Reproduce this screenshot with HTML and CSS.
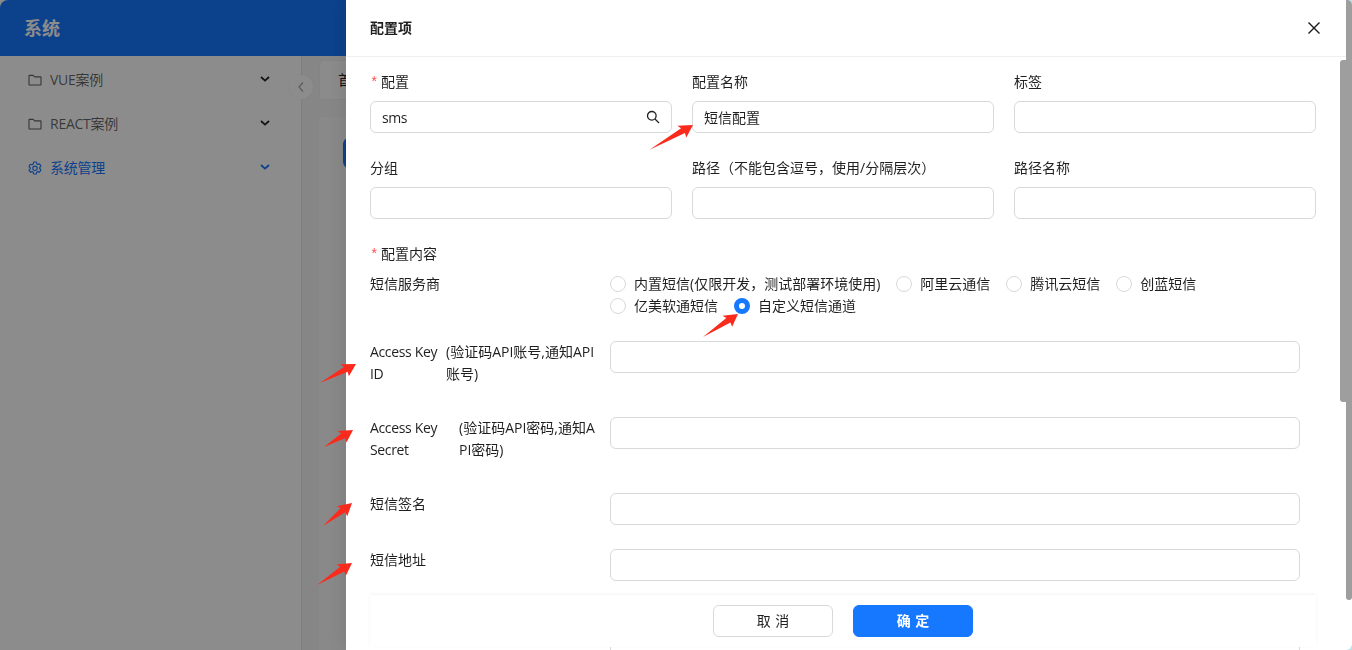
FILE: index.html
```html
<!DOCTYPE html>
<html lang="zh-CN">
<head>
<meta charset="utf-8">
<title>配置项</title>
<link rel="stylesheet" href="styles.css">
</head>
<body>
<div class="app">
  <header class="topbar"><span class="brand">系统</span></header>
  <div class="workspace">
    <aside class="sidebar">
      <nav class="menu">
        <a class="menu-item">
          <svg class="menu-icon" viewBox="0 0 14 14"><path d="M1 3a.6.6 0 0 1 .6-.6h3.6l1.5 1.5h5.7a.6.6 0 0 1 .6.6v6.9a.6.6 0 0 1-.6.6H1.6a.6.6 0 0 1-.6-.6z"/></svg>
          <span class="menu-text">VUE案例</span>
          <svg class="menu-arrow" viewBox="0 0 10 6"><path d="M1 1l4 3.6L9 1"/></svg>
        </a>
        <a class="menu-item">
          <svg class="menu-icon" viewBox="0 0 14 14"><path d="M1 3a.6.6 0 0 1 .6-.6h3.6l1.5 1.5h5.7a.6.6 0 0 1 .6.6v6.9a.6.6 0 0 1-.6.6H1.6a.6.6 0 0 1-.6-.6z"/></svg>
          <span class="menu-text">REACT案例</span>
          <svg class="menu-arrow" viewBox="0 0 10 6"><path d="M1 1l4 3.6L9 1"/></svg>
        </a>
        <a class="menu-item is-active">
          <svg class="menu-icon" viewBox="0 0 14 14"><path d="M5.6 1h2.8l.4 1.8 1.1.6 1.8-.5 1.3 2.3-1.3 1.3v1l1.3 1.3-1.3 2.3-1.8-.5-1.1.6-.4 1.8H5.6l-.4-1.8-1.1-.6-1.8.5L1 9.100l1.300-1.300v-1L1 5.500l1.300-2.300 1.800.5 1.100-.6z"/><circle cx="7" cy="7.300" r="2.200"/></svg>
          <span class="menu-text">系统管理</span>
          <svg class="menu-arrow" viewBox="0 0 10 6"><path d="M1 1l4 3.600L9 1"/></svg>
        </a>
      </nav>
    </aside>
    <main class="main">
      <div class="tabs"><span class="tab-text">首页</span></div>
      <section class="card"><span class="card-button"></span></section>
    </main>
    <button class="collapse" type="button" aria-label="收起">
      <svg viewBox="0 0 8 12"><path d="M6 1.500L2 6l4 4.500"/></svg>
    </button>
  </div>
</div>

<div class="mask"></div>

<aside class="drawer">
  <header class="drawer-head">
    <h1 class="drawer-title">配置项</h1>
    <button class="close" type="button" aria-label="关闭">
      <svg viewBox="0 0 14 14"><path d="M1.500 1.500l11 11M12.500 1.500l-11 11"/></svg>
    </button>
  </header>
  <div class="drawer-body">
    <form class="form">
      <div class="grid">
        <div class="field">
          <label class="label"><span class="req">*</span>配置</label>
          <div class="search-box">
            <input class="input input-latin" value="sms">
            <svg class="search-icon" viewBox="0 0 14 14"><circle cx="5.800" cy="5.800" r="4.300"/><path d="M9 9l4 4"/></svg>
          </div>
        </div>
        <div class="field">
          <label class="label">配置名称</label>
          <input class="input" value="短信配置">
        </div>
        <div class="field">
          <label class="label">标签</label>
          <input class="input">
        </div>
        <div class="field">
          <label class="label">分组</label>
          <input class="input">
        </div>
        <div class="field">
          <label class="label">路径（不能包含逗号，使用/分隔层次）</label>
          <input class="input">
        </div>
        <div class="field">
          <label class="label">路径名称</label>
          <input class="input">
        </div>
      </div>

      <label class="label"><span class="req">*</span>配置内容</label>

      <div class="sub-row">
        <div class="sub-label">短信服务商</div>
        <div class="radios">
          <label class="radio"><span class="dot"></span><span class="radio-text">内置短信(仅限开发，测试部署环境使用)</span></label>
          <label class="radio"><span class="dot"></span><span class="radio-text">阿里云通信</span></label>
          <label class="radio"><span class="dot"></span><span class="radio-text">腾讯云短信</span></label>
          <label class="radio"><span class="dot"></span><span class="radio-text">创蓝短信</span></label>
          <label class="radio"><span class="dot"></span><span class="radio-text">亿美软通短信</span></label>
          <label class="radio"><span class="dot is-on"></span><span class="radio-text">自定义短信通道</span></label>
        </div>
      </div>

      <div class="sub-row is-tall">
        <div class="sub-label">
          <span class="key key-id">Access Key ID</span>
          <span class="note">(验证码API账号,通知API账号)</span>
        </div>
        <input class="input sub-input">
      </div>
      <div class="sub-row is-tall">
        <div class="sub-label">
          <span class="key key-secret">Access Key Secret</span>
          <span class="note">(验证码API密码,通知API密码)</span>
        </div>
        <input class="input sub-input">
      </div>
      <div class="sub-row">
        <div class="sub-label">短信签名</div>
        <input class="input sub-input">
      </div>
      <div class="sub-row">
        <div class="sub-label">短信地址</div>
        <input class="input sub-input">
      </div>
      <div class="sub-row">
        <div class="sub-label">短信模板</div>
        <div class="input sub-input tall-input"></div>
      </div>
    </form>
  </div>
  <footer class="drawer-foot">
    <button class="btn" type="button">取 消</button>
    <button class="btn btn-primary" type="button">确 定</button>
  </footer>
  <div class="inner-thumb"></div>
</aside>

<div class="outer-scroll"><div class="outer-track"><div class="outer-thumb"></div></div></div>

<svg class="arrows" viewBox="0 0 1352 650" aria-hidden="true">
  <polygon transform="translate(693 125) rotate(-29.700)" points="-50,0 -12,-3 -14,-7 0,0 -12,7.500 -11,3"/>
  <polygon transform="translate(738 314) rotate(-33.300)" points="-41.900,0 -12,-3 -14,-7 0,0 -12,7.500 -11,3"/>
  <polygon transform="translate(356 364) rotate(-27.800)" points="-40.700,0 -12,-3 -14,-7 0,0 -12,7.500 -11,3"/>
  <polygon transform="translate(353 430) rotate(-30.400)" points="-33.600,0 -12,-3 -14,-7 0,0 -12,7.500 -11,3"/>
  <polygon transform="translate(352 503) rotate(-38.400)" points="-37,0 -12,-3 -14,-7 0,0 -12,7.500 -11,3"/>
  <polygon transform="translate(352 563) rotate(-32.200)" points="-41.300,0 -12,-3 -14,-7 0,0 -12,7.500 -11,3"/>
</svg>
</body>
</html>
```

FILE: styles.css
```css
* { box-sizing: border-box; }
html, body {
  margin: 0;
  width: 1352px;
  height: 650px;
  overflow: hidden;
  background: #fff;
}
body {
  font-family: "Open Sans", "Noto Sans CJK SC", "Noto Sans", sans-serif;
  font-size: 14px;
  line-height: 22px;
  color: rgba(0, 0, 0, .88);
}

/* Page behind the drawer */
.app {
  height: 650px;
  display: flex;
  flex-direction: column;
  border-top-left-radius: 8px;
  overflow: hidden;
  background: #fff;
}
.topbar {
  height: 56px;
  flex: none;
  display: flex;
  align-items: center;
  padding-left: 24px;
  background: #1677ff;
}
.brand {
  font-size: 18px;
  font-weight: 700;
  color: #fff;
}
.workspace {
  flex: 1;
  display: flex;
  position: relative;
  min-height: 0;
}
.sidebar {
  width: 302px;
  flex: none;
  border-right: 1px solid #e6e6e6;
  background: #fff;
}
.menu {
  display: flex;
  flex-direction: column;
  gap: 4px;
  padding: 4px 31px 0 28px;
}
.menu-item {
  height: 40px;
  display: flex;
  align-items: center;
  color: rgba(0, 0, 0, .62);
}
.menu-item.is-active { color: #1677ff; }
.menu-icon {
  width: 14px;
  height: 14px;
  fill: none;
  stroke: currentColor;
  stroke-width: 1.100;
  stroke-linejoin: round;
  flex: none;
}
.menu-text {
  margin-left: 8px;
  flex: 1;
  letter-spacing: -.25px;
}
.menu-arrow {
  width: 10px;
  height: 6px;
  fill: none;
  stroke: rgba(0, 0, 0, .85);
  stroke-width: 1.800;
  margin-top: -2px;
}
.is-active .menu-arrow { stroke: #1677ff; }
.main {
  flex: 1;
  padding: 4px 0 0 17px;
  background: #f5f5f5;
}
.tabs {
  height: 40px;
  display: flex;
  align-items: center;
  padding-left: 18px;
  border: 1px solid #f0f0f0;
  border-radius: 6px 6px 0 0;
  background: #fdfdfd;
  font-size: 14px;
}
.card {
  margin-top: 17px;
  height: 560px;
  padding: 21px 24px;
  background: #fafafa;
}
.card-button {
  display: block;
  width: 100px;
  height: 30px;
  border-radius: 6px;
  background: #1677ff;
}
.collapse {
  position: absolute;
  left: 289px;
  top: 19px;
  width: 24px;
  height: 24px;
  padding: 0;
  display: flex;
  align-items: center;
  justify-content: center;
  border: 0;
  border-radius: 50%;
  background: #fff;
  box-shadow: 0 0 2px rgba(0, 0, 0, .06);
}
.collapse svg {
  width: 8px;
  height: 12px;
  fill: none;
  stroke: rgba(0, 0, 0, .35);
  stroke-width: 1.200;
}

/* Overlay layers */
.mask {
  position: fixed;
  inset: 0;
  background: rgba(0, 0, 0, .45);
}
.drawer {
  position: fixed;
  left: 346px;
  top: 0;
  width: 1006px;
  height: 650px;
  display: flex;
  flex-direction: column;
  background: #fff;
  box-shadow: -6px 0 16px rgba(0, 0, 0, .08);
}
.drawer-head {
  height: 57px;
  flex: none;
  display: flex;
  align-items: center;
  justify-content: space-between;
  padding: 0 31px 0 24px;
  border-bottom: 1px solid #f0f0f0;
}
.drawer-title {
  margin: 0;
  font-size: 14px;
  font-weight: 600;
  line-height: 22px;
}
.close {
  width: 14px;
  height: 14px;
  padding: 0;
  border: 0;
  background: none;
  display: block;
}
.close svg {
  display: block;
  width: 14px;
  height: 14px;
  fill: none;
  stroke: #1a1a1a;
  stroke-width: 1.400;
}
.drawer-body {
  flex: 1;
  min-height: 0;
  overflow: hidden;
  padding: 14px 36px 0 24px;
}
.grid {
  display: grid;
  grid-template-columns: repeat(3, 302px);
  column-gap: 20px;
  row-gap: 24px;
  margin-bottom: 24px;
}
.label {
  display: block;
  height: 22px;
  margin-bottom: 8px;
  white-space: nowrap;
}
.req {
  display: inline-block;
  width: 11px;
  color: #ff4d4f;
  font-family: "Liberation Mono", monospace;
  font-size: 14px;
}
.input {
  display: block;
  width: 100%;
  height: 32px;
  padding: 4px 11px;
  border: 1px solid #d9d9d9;
  border-radius: 6px;
  background: #fff;
  font: inherit;
  color: rgba(0, 0, 0, .88);
  outline: 0;
}
.input-latin { letter-spacing: -.4px; }
.search-box { position: relative; }
.search-box .input { padding-right: 30px; }
.search-icon {
  position: absolute;
  right: 12px;
  top: 9px;
  width: 14px;
  height: 14px;
  fill: none;
  stroke: #222;
  stroke-width: 1.300;
}

.sub-row {
  display: flex;
  margin-bottom: 24px;
}
.sub-row.is-tall { min-height: 52px; }
.sub-label {
  width: 240px;
  flex: none;
  display: flex;
  padding-right: 15px;
}
.key {
  flex: none;
  letter-spacing: -.35px;
}
.key-id { width: 76px; }
.key-secret { width: 89px; }
.note {
  flex: 1;
  word-break: break-all;
}
.sub-input {
  width: 690px;
  flex: none;
}
.tall-input { height: 80px; }

.radios {
  flex: 1;
  display: flex;
  flex-wrap: wrap;
}
.radio {
  display: inline-flex;
  align-items: center;
  height: 22px;
  margin-right: 8px;
}
.dot {
  width: 16px;
  height: 16px;
  flex: none;
  border: 1px solid #d9d9d9;
  border-radius: 50%;
  background: #fff;
}
.dot.is-on { border: 5px solid #1677ff; }
.radio-text { padding: 0 8px; white-space: nowrap; }

.drawer-foot {
  position: absolute;
  left: 24px;
  top: 595px;
  width: 946px;
  height: 52px;
  display: flex;
  justify-content: center;
  gap: 20px;
  padding-top: 10px;
  background: #fff;
  box-shadow: 0 -1px 3px rgba(0, 0, 0, .05);
}
.btn {
  width: 120px;
  height: 32px;
  padding: 0;
  border: 1px solid #d9d9d9;
  border-radius: 6px;
  background: #fff;
  font: inherit;
  word-spacing: 1px;
  color: rgba(0, 0, 0, .88);
}
.btn-primary {
  border-color: #1677ff;
  background: #1677ff;
  color: #fff;
  font-weight: 600;
}
.inner-thumb {
  position: absolute;
  left: 994px;
  top: 60px;
  width: 6px;
  height: 342px;
  border-radius: 3px 0 0 3px;
  background: #9e9e9e;
}
.outer-scroll {
  position: fixed;
  left: 1346px;
  top: 0;
  width: 6px;
  height: 650px;
  background: #bfe0e4;
}
.outer-track {
  height: 650px;
  border-bottom-right-radius: 6px;
  background: linear-gradient(#bfe0e4 6px, #fff 6px);
}
.outer-thumb {
  height: 600px;
  border-radius: 0 5px 3px 3px;
  background: #9e9e9e;
}
.arrows {
  position: fixed;
  left: 0;
  top: 0;
  width: 1352px;
  height: 650px;
  pointer-events: none;
}
.arrows polygon { fill: #fa2a1c; }
```
